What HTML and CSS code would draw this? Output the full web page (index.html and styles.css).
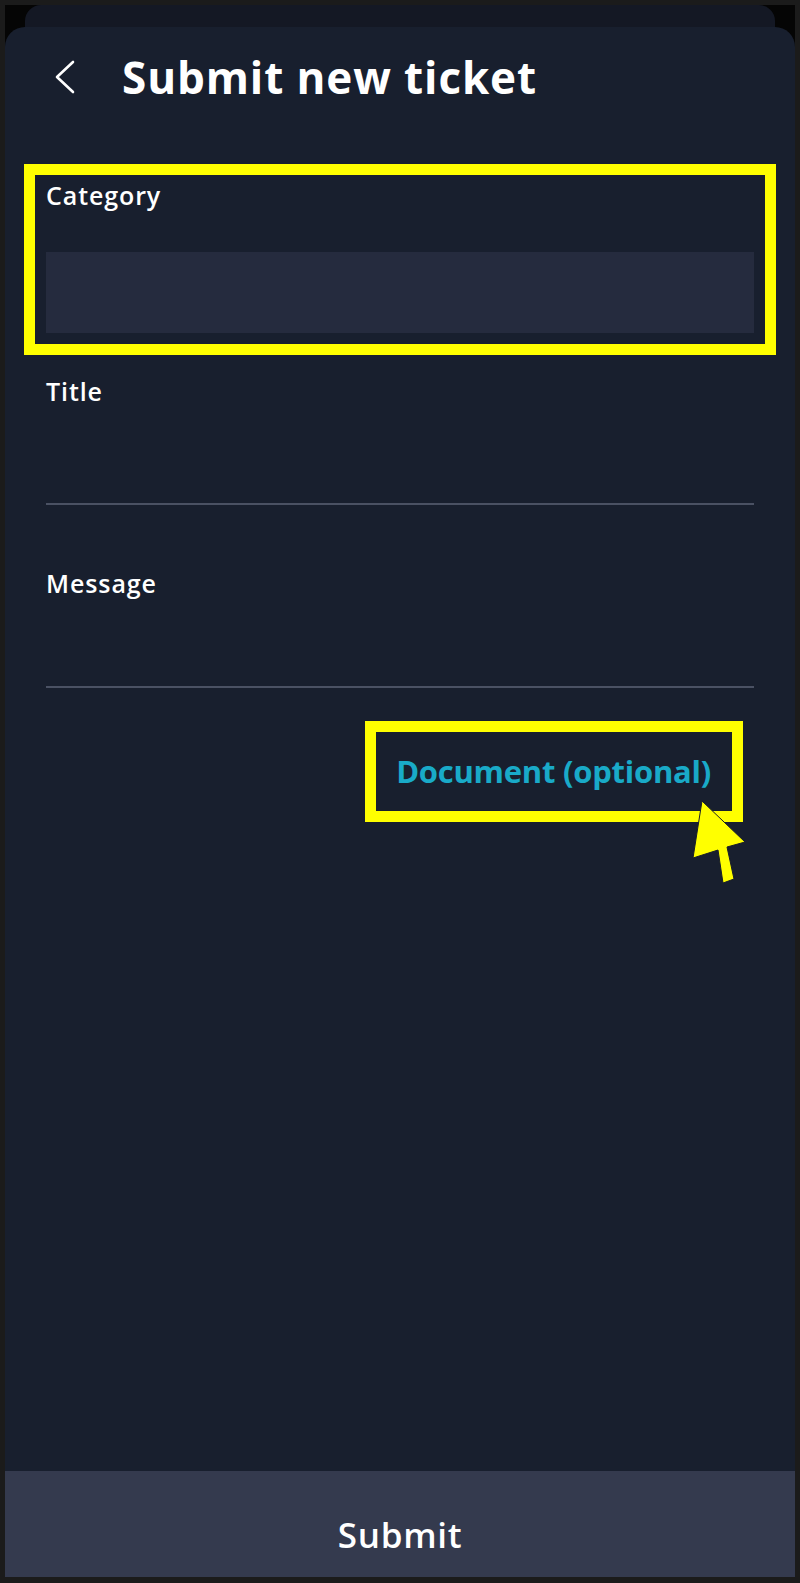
FILE: index.html
```html
<!DOCTYPE html>
<html>

<head>
  <title>Submit new ticket</title>
  <meta charset="utf-8">
  <link rel="stylesheet" href="styles.css">
</head>

<body>
  <div class="frame">
    <div class="screen">
      <div class="card-behind"></div>

      <div class="sheet">
        <div class="header">
          <svg class="back" width="20" height="34" viewBox="0 0 20 34">
            <polyline points="18,2 2,17 18,32" fill="none" stroke="#fff" stroke-width="2.6" stroke-linecap="round" stroke-linejoin="round" />
          </svg>
          <h1>Submit new ticket</h1>
        </div>

        <div class="form">
          <div class="highlight">
            <label class="field-label">Category</label>
            <div class="select-box"></div>
          </div>

          <label class="field-label title-label">Title</label>
          <div class="line-input title-input"></div>

          <label class="field-label message-label">Message</label>
          <div class="line-input message-input"></div>

          <div class="doc-row">
            <div class="highlight doc-box">
              <span class="doc-link">Document (optional)</span>
              <svg class="pointer" width="65" height="95" viewBox="0 0 65 95">
                <polygon points="17,6 8,63 33,55 38,88 49,84 42,52 60,47" fill="#ffff00" stroke="#171d2a" stroke-width="1" stroke-linejoin="round" />
              </svg>
            </div>
          </div>
        </div>

        <div class="spacer"></div>

        <button class="submit">Submit</button>
      </div>
    </div>
  </div>
</body>

</html>
```

FILE: styles.css
```css
body {
  margin: 0;
  background-color: #1b1b1b;
  font-family: "Open Sans", Lato, sans-serif;
  color: #fff;
}

.frame {
  height: 1583px;
  padding: 5px 5px 6px 5px;
  box-sizing: border-box;
}

.screen {
  height: 100%;
  background-color: #050505;
  display: flex;
  flex-direction: column;
}

.card-behind {
  height: 42px;
  margin: 0 20px;
  flex-shrink: 0;
  background-color: #141824;
  border-radius: 16px 16px 0 0;
}

.sheet {
  flex: 1;
  margin-top: -20px;
  background-color: #181f2e;
  border-radius: 20px 20px 0 0;
  display: flex;
  flex-direction: column;
  overflow: hidden;
}

.header {
  display: flex;
  align-items: center;
  gap: 47px;
  padding: 24px 0 0 50px;
}

.header h1 {
  margin: 0;
  font-size: 44px;
  line-height: 52px;
  font-weight: 700;
  letter-spacing: 0.9px;
}

.form {
  display: flex;
  flex-direction: column;
  padding: 0 41px;
  margin-top: 61px;
}

.highlight {
  border: 11px solid #ffff00;
}

.form > .highlight {
  margin: 0 -22px;
  padding: 5px 11px 11px 11px;
}

.field-label {
  display: block;
  font-size: 25px;
  line-height: 30px;
  font-weight: 600;
  letter-spacing: 0.9px;
}

.select-box {
  height: 81px;
  margin-top: 42px;
  background-color: #252b3e;
}

.title-label {
  margin-top: 21px;
}

.line-input {
  border-bottom: 2px solid #4a5163;
}

.title-input {
  height: 97px;
}

.message-label {
  margin-top: 63px;
}

.message-input {
  height: 88px;
}

.doc-row {
  display: flex;
  justify-content: flex-end;
  margin-top: 33px;
  padding-right: 11px;
}

.doc-box {
  position: relative;
  padding: 12px 21px 12px 20px;
}

.doc-link {
  display: block;
  font-size: 31px;
  line-height: 55px;
  font-weight: 700;
  letter-spacing: -0.25px;
  color: #19aac8;
}

.pointer {
  position: absolute;
  right: -18px;
  top: 63px;
}

.spacer {
  flex: 1;
}

.submit {
  height: 106px;
  padding: 20px 0 0 0;
  border: none;
  background-color: #343a4e;
  color: #fff;
  font-family: "Open Sans", Lato, sans-serif;
  font-size: 35px;
  font-weight: 600;
  letter-spacing: 0.7px;
}
```
